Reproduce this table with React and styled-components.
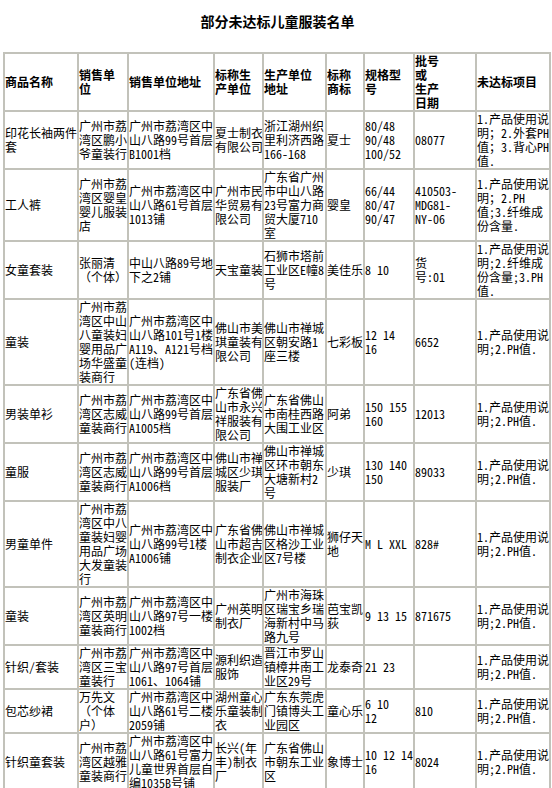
import styled, { createGlobalStyle } from "styled-components";

const GlobalStyle = createGlobalStyle`
  body {
    margin: 0;
    background: #ffffff;
    color: #000000;
    font-family: "Noto Sans Mono CJK SC", "Noto Sans CJK SC", sans-serif;
  }
`;

const Page = styled.div`
  width: 552px;
  padding: 0 0 0 3px;
  box-sizing: border-box;
`;

const Title = styled.h1`
  margin: 13px 0 23px;
  font-size: 14px;
  line-height: 16px;
  font-weight: 700;
  text-align: center;
`;

const Table = styled.table`
  width: 547px;
  table-layout: fixed;
  border-collapse: collapse;
  font-size: 12px;
  line-height: 14px;
`;

const Cell = styled.td`
  border: 2px solid #c2c2ba;
  padding: 0;
  vertical-align: middle;
  text-align: left;
  overflow: hidden;
  white-space: nowrap;
  font-weight: ${({ $head }) => ($head ? 700 : 400)};
`;

const Line = styled.div`
  height: 14px;
`;

const widths = [74, 50, 86, 49, 63, 38, 50, 62, 74];

const head = [
  ["商品名称"],
  ["销售单", "位"],
  ["销售单位地址"],
  ["标称生", "产单位"],
  ["生产单位", "地址"],
  ["标称", "商标"],
  ["规格型", "号"],
  ["批号", "或", "生产", "日期"],
  ["未达标项目"],
];

const rows = [
  [
    ["印花长袖两件", "套"],
    ["广州市荔", "湾区鹏小", "爷童装行"],
    ["广州市荔湾区中", "山八路99号首层", "B1001档"],
    ["夏士制衣", "有限公司"],
    ["浙江湖州织", "里利济西路", "166-168"],
    ["夏士"],
    ["80/48", "90/48", "100/52"],
    ["08077"],
    ["1.产品使用说", "明；2.外套PH", "值；3.背心PH", "值."],
  ],
  [
    ["工人裤"],
    ["广州市荔", "湾区婴皇", "婴儿服装", "店"],
    ["广州市荔湾区中", "山八路61号首层", "1013铺"],
    ["广州市民", "华贸易有", "限公司"],
    ["广东省广州", "市中山八路", "23号富力商", "贸大厦710", "室"],
    ["婴皇"],
    ["66/44", "80/47", "90/47"],
    ["410503-", "MDG81-", "NY-06"],
    ["1.产品使用说", "明；2.PH", "值;3.纤维成", "份含量."],
  ],
  [
    ["女童套装"],
    ["张丽清", "（个体）"],
    ["中山八路89号地", "下之2铺"],
    ["天宝童装"],
    ["石狮市塔前", "工业区E幢8", "号"],
    ["美佳乐"],
    ["8 10"],
    ["货", "号:01"],
    ["1.产品使用说", "明;2.纤维成", "份含量;3.PH", "值."],
  ],
  [
    ["童装"],
    ["广州市荔", "湾区中山", "八童装妇", "婴用品广", "场华盛童", "装商行"],
    ["广州市荔湾区中", "山八路101号1楼", "A119、A121号档", "(连档)"],
    ["佛山市美", "琪童装有", "限公司"],
    ["佛山市禅城", "区朝安路1", "座三楼"],
    ["七彩板"],
    ["12 14", "16"],
    ["6652"],
    ["1.产品使用说", "明;2.PH值."],
  ],
  [
    ["男装单衫"],
    ["广州市荔", "湾区志威", "童装商行"],
    ["广州市荔湾区中", "山八路99号首层", "A1005档"],
    ["广东省佛", "山市永兴", "祥服装有", "限公司"],
    ["广东省佛山", "市南桂西路", "大围工业区"],
    ["阿弟"],
    ["150 155", "160"],
    ["12013"],
    ["1.产品使用说", "明;2.PH值."],
  ],
  [
    ["童服"],
    ["广州市荔", "湾区志威", "童装商行"],
    ["广州市荔湾区中", "山八路99号首层", "A1006档"],
    ["佛山市禅", "城区少琪", "服装厂"],
    ["佛山市禅城", "区环市朝东", "大塘新村2", "号"],
    ["少琪"],
    ["130 140", "150"],
    ["89033"],
    ["1.产品使用说", "明;2.PH值."],
  ],
  [
    ["男童单件"],
    ["广州市荔", "湾区中八", "童装妇婴", "用品广场", "大发童装", "行"],
    ["广州市荔湾区中", "山八路99号1楼", "A1006铺"],
    ["广东省佛", "山市超吉", "制衣企业"],
    ["佛山市禅城", "区格沙工业", "区7号楼"],
    ["狮仔天", "地"],
    ["M L XXL"],
    ["828#"],
    ["1.产品使用说", "明;2.PH值."],
  ],
  [
    ["童装"],
    ["广州市荔", "湾区英明", "童装商行"],
    ["广州市荔湾区中", "山八路97号一楼", "1002档"],
    ["广州英明", "制衣厂"],
    ["广州市海珠", "区瑞宝乡瑞", "海新村中马", "路九号"],
    ["芭宝凯", "荻"],
    ["9 13 15"],
    ["871675"],
    ["1.产品使用说", "明;2.PH值."],
  ],
  [
    ["针织/套装"],
    ["广州市荔", "湾区三宝", "童装行"],
    ["广州市荔湾区中", "山八路97号首层", "1061、1064铺"],
    ["源利织造", "服饰"],
    ["晋江市罗山", "镇樟井南工", "业区29号"],
    ["龙泰奇"],
    ["21 23"],
    [""],
    ["1.产品使用说", "明;2.PH值."],
  ],
  [
    ["包芯纱裙"],
    ["万先文", "（个体", "户）"],
    ["广州市荔湾区中", "山八路61号二楼", "2059铺"],
    ["湖州童心", "乐童装制", "衣"],
    ["广东东莞虎", "门镇博头工", "业园区"],
    ["童心乐"],
    ["6 10", "12"],
    ["810"],
    ["1.产品使用说", "明;2.PH值."],
  ],
  [
    ["针织童套装"],
    ["广州市荔", "湾区越雅", "童装商行"],
    ["广州市荔湾区中", "山八路61号富力", "儿童世界首层自", "编1035B号铺"],
    ["长兴(年", "丰)制衣", "厂"],
    ["广东省佛山", "市朝东工业", "区"],
    ["象博士"],
    ["10 12 14", "16"],
    ["8024"],
    ["1.产品使用说", "明;2.PH值."],
  ],
];

const Lines = ({ lines }) =>
  lines.map((line, i) => <Line key={i}>{line || "\u00a0"}</Line>);

export default function App() {
  return (
    <Page>
      <GlobalStyle />
      <Title>部分未达标儿童服装名单</Title>
      <Table>
        <colgroup>
          {widths.map((w, i) => (
            <col key={i} style={{ width: w }} />
          ))}
        </colgroup>
        <tbody>
          <tr>
            {head.map((c, i) => (
              <Cell as="th" $head key={i}>
                <Lines lines={c} />
              </Cell>
            ))}
          </tr>
          {rows.map((r, ri) => (
            <tr key={ri}>
              {r.map((c, ci) => (
                <Cell key={ci}>
                  <Lines lines={c} />
                </Cell>
              ))}
            </tr>
          ))}
        </tbody>
      </Table>
    </Page>
  );
}
